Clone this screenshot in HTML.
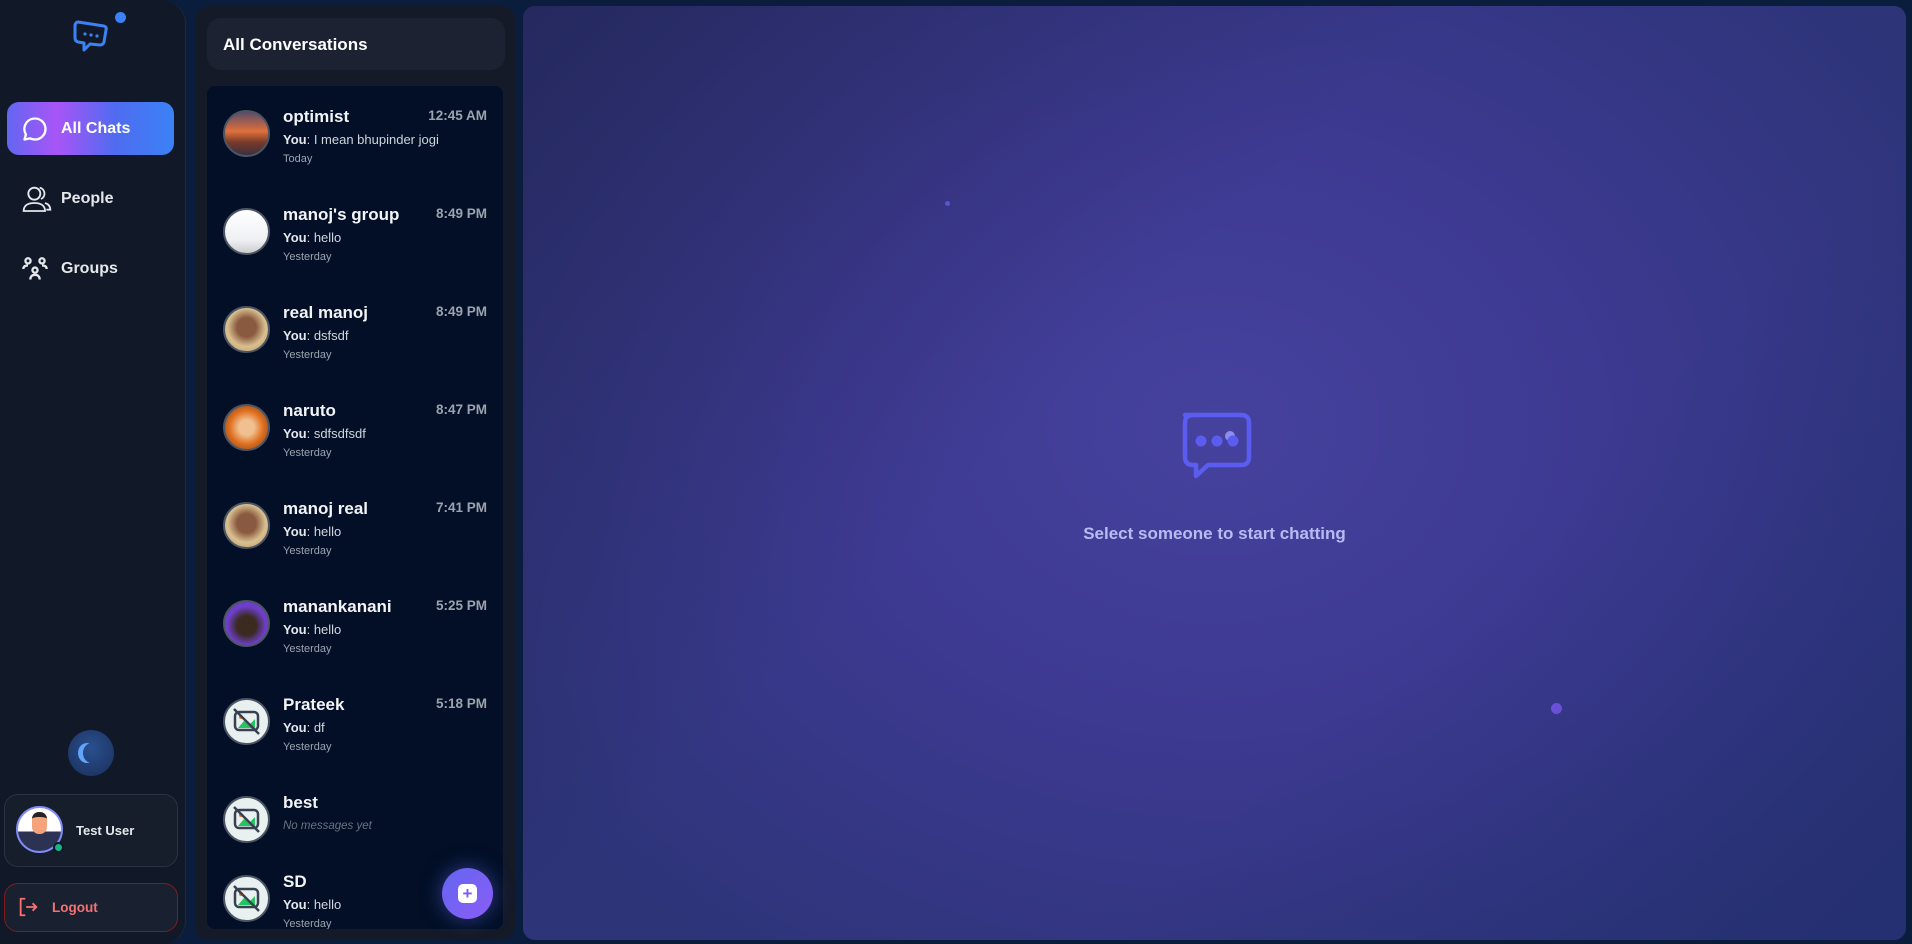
<!DOCTYPE html>
<html><head><meta charset="utf-8"><style>
*{box-sizing:border-box;margin:0;padding:0}
body{width:1912px;height:944px;overflow:hidden;background:#0b1d3d;font-family:"Liberation Sans",sans-serif;position:relative;color:#fff}
.side{position:absolute;left:0;top:0;width:186px;height:944px;background:#111827;border-right:1px solid #1f2937;border-radius:0 24px 24px 0}
.nav{position:absolute;left:7px;width:167px;height:53px;border-radius:12px;display:flex;align-items:center;font-weight:bold;font-size:16px;color:#e5e7eb}
.nav svg{position:absolute;left:14px}
.nav span{position:absolute;left:54px}
.panel{position:absolute;left:195px;top:6px;width:320px;height:934px;background:#141a28;border-radius:14px}
.hdr{position:absolute;left:12px;top:12px;width:298px;height:52px;background:#1c2231;border-radius:14px;font-weight:bold;font-size:17px;padding:20px 0 0 16px;line-height:14px}
.list{position:absolute;left:12px;top:80px;width:296px;height:843px;background:#020f26;border-radius:8px;overflow:hidden}
.it{position:absolute;left:0;width:296px;height:98px}
.av{position:absolute;left:16px;top:24px;width:47px;height:47px;border-radius:50%;border:2px solid #4b5563;overflow:hidden}
.nm{position:absolute;left:76px;top:21px;font-size:17px;font-weight:bold;color:#f3f4f6}
.tm{position:absolute;right:16px;top:22px;font-size:13.5px;font-weight:bold;color:#9ca3af}
.ms{position:absolute;left:76px;top:46px;font-size:13px;color:#d1d5db}
.ms b{color:#e5e7eb}
.dt{position:absolute;left:76px;top:67px;font-size:11px;color:#9ca3af}
.main{position:absolute;left:523px;top:6px;width:1383px;height:934px;border-radius:12px;background:radial-gradient(ellipse 60% 70% at 50% 45%,#45429e 0%,#3d3a92 45%,#2d3478 100%),#2e2f6e;overflow:hidden}
.main:before{content:"";position:absolute;inset:0;background:linear-gradient(135deg,rgba(30,30,70,.5) 0%,rgba(0,0,0,0) 40%,rgba(0,0,0,0) 65%,rgba(20,40,100,.35) 100%)}
.brk{background:#e8f0f0}
</style></head><body>
<div class="side">
 <svg style="position:absolute;left:72px;top:12px" width="50" height="46" viewBox="0 0 50 46"><path d="M6 10 L32 14 Q35 15 34 18 L32 30 Q31 33 28 33 L18 32 L12 38 L12 31 L6 30 Q3 29 3 26 L3 13 Q4 10 6 10Z" fill="none" stroke="#3b82f6" stroke-width="3" stroke-linejoin="round"/><circle cx="13" cy="22" r="1.6" fill="#3b82f6"/><circle cx="19" cy="23" r="1.6" fill="#3b82f6"/><circle cx="25" cy="24" r="1.6" fill="#3b82f6"/></svg>
 <div style="position:absolute;left:115px;top:12px;width:11px;height:11px;border-radius:50%;background:#3b82f6"></div>
 <div class="nav" style="top:102px;background:linear-gradient(90deg,#6366f1 0%,#a855f7 30%,#4f6cf0 65%,#3b82f6 100%);color:#fff">
  <svg width="28" height="28" viewBox="0 0 24 24" fill="none" stroke="#fff" stroke-width="2"><path d="M12 3a9 9 0 0 1 0 18c-1.6 0-3-.4-4.3-1L3 21l1.2-4.3A9 9 0 0 1 12 3z" stroke-linejoin="round"/></svg><span>All Chats</span></div>
 <div class="nav" style="top:172px"><svg width="32" height="32" viewBox="0 0 24 24" fill="none" stroke="#e5e7eb" stroke-width="1.4"><circle cx="10" cy="8" r="4.5"/><path d="M2 21c0-4 3-6 8-6s8 2 8 6z"/><path d="M14 3.5a4.5 4.5 0 0 1 1 8.5M18 15c2.5.8 4 2.5 4 5h-3"/></svg><span>People</span></div>
 <div class="nav" style="top:242px"><svg width="28" height="28" viewBox="0 0 24 24" fill="none" stroke="#e5e7eb" stroke-width="2"><circle cx="6" cy="5" r="2.2"/><circle cx="18" cy="5" r="2.2"/><circle cx="12" cy="13" r="2.2"/><path d="M2 12c0-2 1.5-3 4-3M22 12c0-2-1.5-3-4-3M8 21c0-2.5 1.5-4 4-4s4 1.5 4 4"/></svg><span>Groups</span></div>
 <div style="position:absolute;left:68px;top:730px;width:46px;height:46px;border-radius:50%;background:radial-gradient(circle at 50% 40%,#2a4f8f,#1a2f5a)"></div>
 <div style="position:absolute;left:83px;top:743px;width:18px;height:20px;border-radius:50%;box-shadow:-5px 0 0 0 #60a5fa"></div>
 <div style="position:absolute;left:4px;top:794px;width:174px;height:73px;border:1px solid #2a3344;border-radius:14px;background:#161d2b"></div>
 <div style="position:absolute;left:16px;top:806px;width:47px;height:47px;border-radius:50%;border:2px solid #818cf8;background:linear-gradient(#fff 0 55%,#2c3352 55%)"></div>
 <div style="position:absolute;left:32px;top:812px;width:15px;height:22px;border-radius:7px;background:#f4a37a;border-top:5px solid #222"></div>
 <div style="position:absolute;left:53px;top:842px;width:11px;height:11px;border-radius:50%;background:#10b981;border:2px solid #111827"></div>
 <div style="position:absolute;left:76px;top:823px;font-size:13px;font-weight:bold;color:#e5e7eb">Test User</div>
 <div style="position:absolute;left:4px;top:883px;width:174px;height:49px;border:1px solid #7f1d1d;border-radius:14px;background:#192131"></div>
 <svg style="position:absolute;left:17px;top:896px" width="22" height="22" viewBox="0 0 24 24" fill="none" stroke="#f87171" stroke-width="2"><path d="M9 3H4v18h5M10 12h11M17 8l4 4-4 4"/></svg>
 <div style="position:absolute;left:52px;top:900px;font-size:13.5px;font-weight:bold;color:#f87171">Logout</div>
</div>

<div class="panel">
 <div class="hdr">All Conversations</div>
 <div class="list">
  <div class="it" style="top:0"><div class="av" style="background:linear-gradient(#5a4a6a,#e0703a 45%,#7a3a2a 70%,#3a3040)"></div><div class="nm">optimist</div><div class="tm">12:45 AM</div><div class="ms"><b>You</b>: I mean bhupinder jogi</div><div class="dt">Today</div></div>
  <div class="it" style="top:98px"><div class="av" style="background:linear-gradient(#fff,#eef0f3 70%,#ccc)"></div><div class="nm">manoj's group</div><div class="tm">8:49 PM</div><div class="ms"><b>You</b>: hello</div><div class="dt">Yesterday</div></div>
  <div class="it" style="top:196px"><div class="av" style="background:radial-gradient(circle at 50% 45%,#8a5a40 30%,#d8c090 60%,#c09060)"></div><div class="nm">real manoj</div><div class="tm">8:49 PM</div><div class="ms"><b>You</b>: dsfsdf</div><div class="dt">Yesterday</div></div>
  <div class="it" style="top:294px"><div class="av" style="background:radial-gradient(circle at 50% 50%,#f0c090 25%,#e07020 55%,#6a3a20)"></div><div class="nm">naruto</div><div class="tm">8:47 PM</div><div class="ms"><b>You</b>: sdfsdfsdf</div><div class="dt">Yesterday</div></div>
  <div class="it" style="top:392px"><div class="av" style="background:radial-gradient(circle at 50% 45%,#8a5a40 30%,#d8c090 60%,#c09060)"></div><div class="nm">manoj real</div><div class="tm">7:41 PM</div><div class="ms"><b>You</b>: hello</div><div class="dt">Yesterday</div></div>
  <div class="it" style="top:490px"><div class="av" style="background:radial-gradient(circle at 50% 55%,#3a2a20 30%,#6d3fc8 60%)"></div><div class="nm">manankanani</div><div class="tm">5:25 PM</div><div class="ms"><b>You</b>: hello</div><div class="dt">Yesterday</div></div>
  <div class="it" style="top:588px"><div class="av brk"><svg width="43" height="43" viewBox="0 0 43 43"><rect x="10" y="12" width="23" height="18" rx="4" fill="none" stroke="#374151" stroke-width="2.5"/><path d="M13 28 L19 21 L24 25 L30 19 L30 28Z" fill="#22c55e"/><circle cx="16" cy="17" r="2" fill="#f97316"/><path d="M9 9 L34 34" stroke="#374151" stroke-width="2.5"/></svg></div><div class="nm">Prateek</div><div class="tm">5:18 PM</div><div class="ms"><b>You</b>: df</div><div class="dt">Yesterday</div></div>
  <div class="it" style="top:686px"><div class="av brk"><svg width="43" height="43" viewBox="0 0 43 43"><rect x="10" y="12" width="23" height="18" rx="4" fill="none" stroke="#374151" stroke-width="2.5"/><path d="M13 28 L19 21 L24 25 L30 19 L30 28Z" fill="#22c55e"/><circle cx="16" cy="17" r="2" fill="#f97316"/><path d="M9 9 L34 34" stroke="#374151" stroke-width="2.5"/></svg></div><div class="nm">best</div><div class="ms" style="top:48px;font-style:italic;font-size:11.5px;color:#6b7280">No messages yet</div></div>
  <div class="it" style="top:765px"><div class="av brk"><svg width="43" height="43" viewBox="0 0 43 43"><rect x="10" y="12" width="23" height="18" rx="4" fill="none" stroke="#374151" stroke-width="2.5"/><path d="M13 28 L19 21 L24 25 L30 19 L30 28Z" fill="#22c55e"/><circle cx="16" cy="17" r="2" fill="#f97316"/><path d="M9 9 L34 34" stroke="#374151" stroke-width="2.5"/></svg></div><div class="nm">SD</div><div class="tm">1</div><div class="ms"><b>You</b>: hello</div><div class="dt">Yesterday</div></div>
 </div>
 <div style="position:absolute;left:247px;top:862px;width:51px;height:51px;border-radius:50%;background:linear-gradient(135deg,#6366f1,#8b5cf6);box-shadow:0 0 20px rgba(99,102,241,.5)"></div>
 <div style="position:absolute;left:263px;top:878px;width:19px;height:19px;border-radius:5px;background:#fff;color:#7c5cf0;font-weight:bold;font-size:17px;line-height:19px;text-align:center">+</div>
</div>

<div class="main">
 <div style="position:absolute;left:422px;top:195px;width:5px;height:5px;border-radius:50%;background:#5558d0"></div>
 <div style="position:absolute;left:1028px;top:697px;width:11px;height:11px;border-radius:50%;background:#6a4fd8"></div>
 <svg style="position:absolute;left:648px;top:400px" width="88" height="88" viewBox="0 0 88 88"><path d="M14 9 H70 Q78 9 78 17 V51 Q78 59 70 59 H37 L25 70 V59 H22 Q14 59 14 51 V17 Q14 9 22 9Z" fill="none" stroke="#5b5cf0" stroke-width="4.5" stroke-linejoin="round"/><circle cx="30" cy="35" r="5.5" fill="#5b5cf0"/><circle cx="46" cy="35" r="5.5" fill="#5b5cf0"/><circle cx="59" cy="30" r="5" fill="#8a8cf0"/><circle cx="62" cy="35" r="5.5" fill="#5b5cf0"/></svg>
 <div style="position:absolute;left:0;width:1383px;top:518px;text-align:center;font-size:17px;font-weight:bold;color:#b8bbf2">Select someone to start chatting</div>
</div>
</body></html>
